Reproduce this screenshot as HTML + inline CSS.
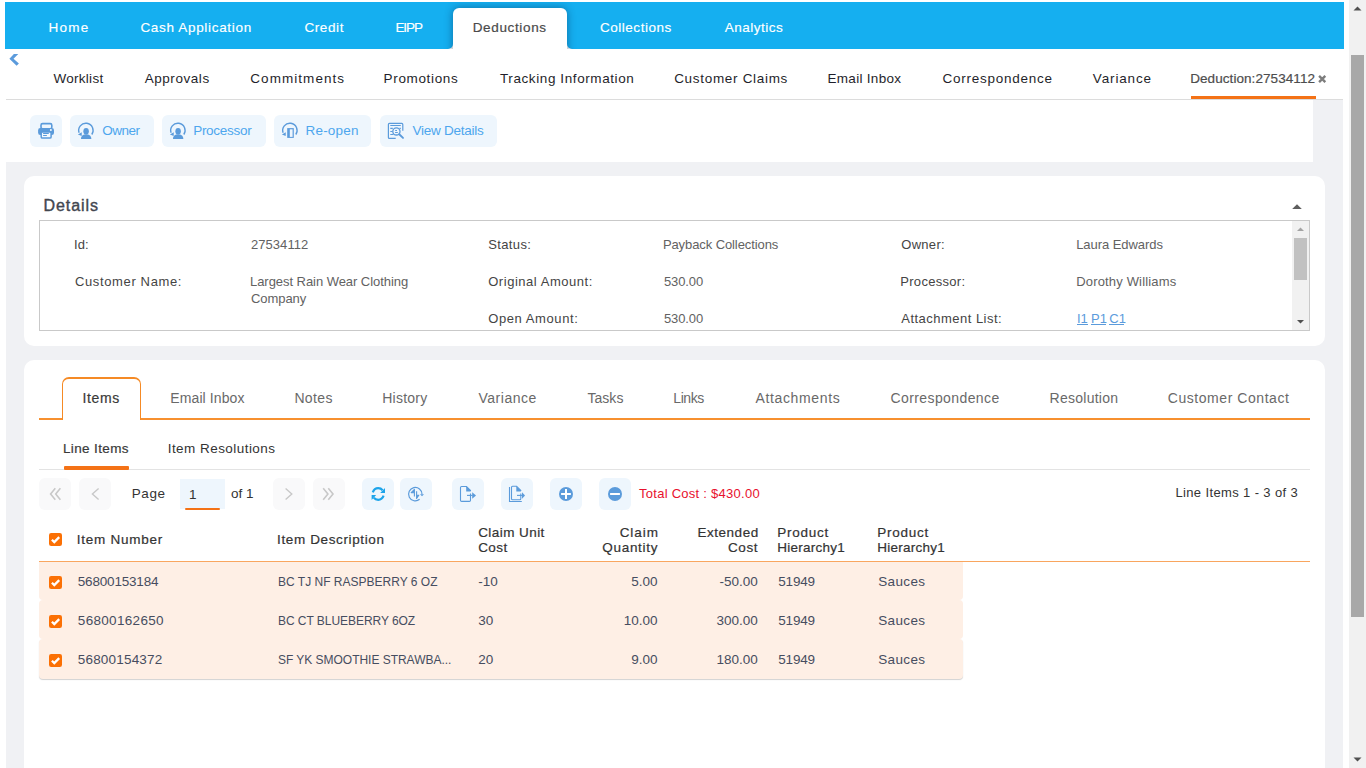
<!DOCTYPE html>
<html><head><meta charset="utf-8">
<style>
*{box-sizing:border-box;margin:0;padding:0}
html,body{width:1366px;height:768px;overflow:hidden;background:#fff;font-family:"Liberation Sans",sans-serif}
.a{position:absolute}
.tx{position:absolute;white-space:pre;font-family:"Liberation Sans",sans-serif}
.btn{position:absolute;background:#eef6fd;border-radius:6px}
.dbtn{position:absolute;background:#f9f9fa;border-radius:6px}
svg{position:absolute;overflow:visible}
</style></head><body>
<!-- page scrollbar -->
<div class="a" style="left:1349px;top:0;width:17px;height:768px;background:#f1f1f1"></div>
<div class="a" style="left:1351px;top:55px;width:13px;height:562px;background:#a8a8a8"></div>
<svg style="left:1349px;top:0" width="17" height="17"><path d="M4.5 10.5 L8.5 6.5 L12.5 10.5Z" fill="#505050"/></svg>
<svg style="left:1349px;top:751px" width="17" height="17"><path d="M4.5 6.5 L8.5 10.5 L12.5 6.5Z" fill="#505050"/></svg>

<!-- top bar -->
<div class="a" style="left:5px;top:2px;width:1339px;height:47px;overflow:hidden">
  <div class="a" style="left:0;top:0;width:448px;height:47px;background:#15aff0;border-radius:0 0 5px 0"></div>
  <div class="a" style="left:440px;top:0;width:130px;height:20px;background:#15aff0"></div>
  <div class="a" style="left:562px;top:0;width:777px;height:47px;background:#15aff0;border-radius:0 0 0 5px"></div>
  <div class="a" style="left:448px;top:6px;width:114px;height:60px;background:#fff;border-radius:6px 6px 0 0;box-shadow:0 0 9px rgba(0,30,70,.45)"></div>
</div>
<!-- back chevron -->
<svg style="left:0;top:0" width="30" height="70"><path d="M13.9 54 L18.3 54 L13.5 58.8 L18.9 63.6 L16.6 65.8 L9.4 58.8Z" fill="#5b9bdc"/></svg>

<!-- second nav line -->
<div class="a" style="left:6px;top:99px;width:1337px;height:1px;background:#dcdcdc"></div>
<div class="a" style="left:1191px;top:96px;width:125px;height:3px;background:#f47216"></div>

<!-- gray page bg -->
<div class="a" style="left:6px;top:100px;width:1337px;height:668px;background:#f0f1f4"></div>
<!-- toolbar -->
<div class="a" style="left:6px;top:100px;width:1307px;height:62px;background:#fff"></div>
<div class="btn" style="left:30px;top:115px;width:32px;height:32px"></div>
<div class="btn" style="left:70px;top:115px;width:84px;height:32px"></div>
<div class="btn" style="left:162px;top:115px;width:104px;height:32px"></div>
<div class="btn" style="left:274px;top:115px;width:97px;height:32px"></div>
<div class="btn" style="left:380px;top:115px;width:117px;height:32px"></div>

<!-- details card -->
<div class="a" style="left:24px;top:176px;width:1301px;height:170px;background:#fff;border-radius:10px"></div>
<div class="a" style="left:39px;top:220px;width:1271px;height:111px;border:1px solid #c9c9c9"></div>
<div class="a" style="left:1292px;top:221px;width:17px;height:109px;background:#f1f1f1"></div>
<div class="a" style="left:1294px;top:238px;width:13px;height:42px;background:#c1c1c1"></div>
<svg style="left:1292px;top:221px" width="17" height="109"><path d="M5 10 L8.5 6.5 L12 10Z" fill="#a3a3a3"/><path d="M5 99 L8.5 102.5 L12 99Z" fill="#505050"/></svg>
<svg style="left:1290px;top:200px" width="14" height="12"><path d="M2.2 9 L7 4.2 L11.8 9Z" fill="#5e5e5e"/></svg>

<!-- items card -->
<div class="a" style="left:24px;top:360px;width:1301px;height:420px;background:#fff;border-radius:10px"></div>
<div class="a" style="left:39px;top:418px;width:1271px;height:2px;background:#f7902f"></div>
<div class="a" style="left:62px;top:377px;width:79px;height:43px;background:#fff;border:1.5px solid #f58a25;border-top-width:2px;border-bottom:none;border-radius:7px 7px 0 0"></div>
<div class="a" style="left:39px;top:469px;width:1271px;height:1px;background:#e3e3e3"></div>
<div class="a" style="left:64px;top:466px;width:65px;height:4px;background:#f47216;border-radius:1px"></div>

<!-- pager buttons -->
<div class="dbtn" style="left:39px;top:478px;width:32px;height:32px"></div>
<div class="dbtn" style="left:79px;top:478px;width:32px;height:32px"></div>
<div class="a" style="left:180px;top:479px;width:45px;height:30px;background:#eef6fd"></div>
<div class="a" style="left:185px;top:507.5px;width:35px;height:2px;background:#f47216;border-radius:1px"></div>
<div class="dbtn" style="left:273px;top:478px;width:32px;height:32px"></div>
<div class="dbtn" style="left:313px;top:478px;width:32px;height:32px"></div>
<div class="btn" style="left:362px;top:478px;width:32px;height:32px"></div>
<div class="btn" style="left:400px;top:478px;width:32px;height:32px"></div>
<div class="btn" style="left:452px;top:478px;width:32px;height:32px"></div>
<div class="btn" style="left:501px;top:478px;width:32px;height:32px"></div>
<div class="btn" style="left:550px;top:478px;width:32px;height:32px"></div>
<div class="btn" style="left:599px;top:478px;width:32px;height:32px"></div>

<!-- table -->
<div class="a" style="left:39px;top:561px;width:1271px;height:1px;background:#f9a65f"></div>
<div class="a" style="left:39px;top:562px;width:924px;height:38px;background:#feefe5;border-radius:0 0 4px 4px"></div>
<div class="a" style="left:39px;top:600px;width:924px;height:39px;background:#feefe5;border-radius:4px"></div>
<div class="a" style="left:39px;top:639px;width:924px;height:40px;background:#feefe5;border-radius:4px;box-shadow:0 1px 1px rgba(0,0,0,.18)"></div>
<!-- printer origin 34,119 -->
<svg style="left:34px;top:119px" width="24" height="24" viewBox="0 0 24 24">
 <rect x="7" y="4.6" width="10.8" height="5.2" rx="1.6" fill="none" stroke="#5b9bdb" stroke-width="1.6"/>
 <rect x="4.1" y="9" width="15.9" height="7" rx="2.2" fill="#5b9bdb"/>
 <rect x="7.2" y="13.1" width="9.9" height="6" rx="1.2" fill="#f4f9fe" stroke="#5b9bdb" stroke-width="1.5"/>
 <path d="M9.1 14.5H14.8M9.1 16.5H12.9" stroke="#5b9bdb" stroke-width="1"/>
 <circle cx="16.9" cy="11" r="1" fill="#f4f9fe"/>
</svg>
<!-- owner origin 74,119 -->
<svg style="left:74px;top:119px" width="24" height="24" viewBox="0 0 24 24">
 <path d="M17.8 15.5 A7.2 7.2 0 1 0 5.1 13.8" fill="none" stroke="#5b9bdb" stroke-width="1.4"/>
 <path d="M3.9 15.6 L7.8 13.2 L7.7 17Z" fill="#5b9bdb"/>
 <ellipse cx="12.1" cy="12.3" rx="2.75" ry="3.4" fill="#5b9bdb"/>
 <path d="M7 20 C7 16.8 9 15.8 11 15.6 L13.2 15.6 C15.4 15.8 17.3 16.8 17.3 20Z" fill="#5b9bdb"/>
</svg>
<!-- processor origin 166,119 -->
<svg style="left:166px;top:119px" width="24" height="24" viewBox="0 0 24 24">
 <path d="M17.8 15.5 A7.2 7.2 0 1 0 5.1 13.8" fill="none" stroke="#5b9bdb" stroke-width="1.4"/>
 <path d="M3.9 15.6 L7.8 13.2 L7.7 17Z" fill="#5b9bdb"/>
 <ellipse cx="12.1" cy="12.3" rx="2.75" ry="3.4" fill="#5b9bdb"/>
 <path d="M7 20 C7 16.8 9 15.8 11 15.6 L13.2 15.6 C15.4 15.8 17.3 16.8 17.3 20Z" fill="#5b9bdb"/>
</svg>
<!-- reopen origin 278,119 -->
<svg style="left:278px;top:119px" width="24" height="24" viewBox="0 0 24 24">
 <path d="M17.8 15.5 A7.2 7.2 0 1 0 5.1 13.8" fill="none" stroke="#5b9bdb" stroke-width="1.4"/>
 <path d="M3.9 15.6 L7.8 13.2 L7.7 17Z" fill="#5b9bdb"/>
 <rect x="9.2" y="9.1" width="6.6" height="9.8" fill="#5b9bdb"/>
 <rect x="11.8" y="10.3" width="2.8" height="7.6" fill="#eef6fd"/>
</svg>
<!-- view details origin 384,119 -->
<svg style="left:384px;top:119px" width="24" height="24" viewBox="0 0 24 24">
 <path d="M11.7 19.4 H5.4 Q4.4 19.4 4.4 18.4 V5.4 Q4.4 4.4 5.4 4.4 H17.8 Q18.8 4.4 18.8 5.4 V11.7" fill="none" stroke="#5b9bdb" stroke-width="1.2"/>
 <path d="M6.3 6.5H16.8M6.3 9.4H8.8M15.5 9.4H16.8M6.3 12.5H8.5M6.3 15.5H9.5" stroke="#5b9bdb" stroke-width="1.1"/>
 <circle cx="12.4" cy="12.4" r="3.6" fill="none" stroke="#5b9bdb" stroke-width="1.3"/>
 <path d="M11.2 11.5H13M11.1 13.5H13.8" stroke="#5b9bdb" stroke-width="1"/>
 <path d="M15.2 15.2 L19 18.9" stroke="#5b9bdb" stroke-width="1.9" stroke-linecap="round"/>
</svg>
<!-- pager disabled chevrons -->
<svg style="left:35px;top:474px" width="320" height="40" viewBox="0 0 320 40">
 <path d="M20.3 14.3 L15.6 20 L20.3 25.7 M25.4 14.3 L20.7 20 L25.4 25.7" fill="none" stroke="#c8c8c8" stroke-width="1.6"/>
 <path d="M63.6 14.5 L57.4 20 L63.6 25.5" fill="none" stroke="#c8c8c8" stroke-width="1.4"/>
 <path d="M250.6 14.5 L256.8 20 L250.6 25.5" fill="none" stroke="#c8c8c8" stroke-width="1.4"/>
 <path d="M288.2 14.3 L292.9 20 L288.2 25.7 M293.3 14.3 L298 20 L293.3 25.7" fill="none" stroke="#c8c8c8" stroke-width="1.6"/>
</svg>
<!-- refresh origin 366,482 -->
<svg style="left:366px;top:482px" width="24" height="24" viewBox="0 0 24 24">
 <path d="M6.8 10.3 C7.8 7.5 9.8 6.2 12.2 6.2 C14.2 6.2 15.6 7 16.6 8.2" fill="none" stroke="#1da4ea" stroke-width="2.2"/>
 <path d="M14.2 10.9 L19 10.9 L19 6Z" fill="#1da4ea"/>
 <path d="M17.6 13.7 C16.6 16.5 14.6 17.8 12.2 17.8 C10.2 17.8 8.8 17 7.8 15.8" fill="none" stroke="#1da4ea" stroke-width="2.2"/>
 <path d="M10.2 13.1 L5.6 13.1 L5.6 18Z" fill="#1da4ea"/>
</svg>
<!-- currency origin 404,482 -->
<svg style="left:404px;top:482px" width="24" height="24" viewBox="0 0 24 24">
 <path d="M15.6 17.3 A6.7 6.7 0 1 1 18 12.2" fill="none" stroke="#5b9bdb" stroke-width="1.2"/>
 <path d="M16 12.3 L20 12.3 L18 14.3Z" fill="#5b9bdb"/>
 <path d="M10.4 14.6 V7.4 L7.2 10.7 H10.4" fill="#5b9bdb" stroke="#5b9bdb" stroke-width="1.1" stroke-linejoin="round"/>
 <path d="M12.6 9.2 V16.4 L14.8 13.3 H12.6" fill="#5b9bdb" stroke="#5b9bdb" stroke-width="1.1" stroke-linejoin="round"/>
</svg>
<!-- export origin 456,482 -->
<svg style="left:456px;top:482px" width="24" height="24" viewBox="0 0 24 24">
 <path d="M14.5 11.4 V18.3 Q14.5 19.4 13.4 19.4 H5.6 Q4.5 19.4 4.5 18.3 V5.6 Q4.5 4.5 5.6 4.5 H10.5 L14.5 8.5 V9" fill="none" stroke="#5b9bdb" stroke-width="1.1"/>
 <path d="M10.2 4.6 L10.6 4.6 L14.7 8.6 V9.6 H10.2Z" fill="#5b9bdb"/>
 <path d="M11 13.4 H16.5" stroke="#5b9bdb" stroke-width="1.1"/>
 <path d="M16.2 10.2 L20 13.4 L16.2 16.8Z" fill="#5b9bdb"/>
</svg>
<!-- export multiple origin 505,482 -->
<svg style="left:505px;top:482px" width="24" height="24" viewBox="0 0 24 24">
 <path d="M4.5 5 V19.5 H16.8" fill="none" stroke="#5b9bdb" stroke-width="1.1"/>
 <path d="M15.8 11.4 V16.8 Q15.8 17.8 14.8 17.8 H7.5 Q6.5 17.8 6.5 16.8 V5.3 Q6.5 4.3 7.5 4.3 H11.6 L15.8 8.4 V9" fill="none" stroke="#5b9bdb" stroke-width="1.1"/>
 <path d="M11.3 4.4 L11.7 4.4 L15.9 8.5 V9.6 H11.3Z" fill="#5b9bdb"/>
 <path d="M12 13.4 H17.3" stroke="#5b9bdb" stroke-width="1.1"/>
 <path d="M17 10.2 L20 13.4 L17 16.8Z" fill="#5b9bdb"/>
</svg>
<!-- plus origin 554,482 -->
<svg style="left:554px;top:482px" width="24" height="24" viewBox="0 0 24 24">
 <circle cx="12" cy="12" r="7" fill="#5b9bdb"/>
 <path d="M7.1 12H16.9M12 7.1V16.9" stroke="#fff" stroke-width="2"/>
</svg>
<!-- minus origin 603,482 -->
<svg style="left:603px;top:482px" width="24" height="24" viewBox="0 0 24 24">
 <circle cx="12" cy="12" r="7" fill="#5b9bdb"/>
 <path d="M7.1 12H16.9" stroke="#fff" stroke-width="2"/>
</svg>
<!-- close x -->
<svg style="left:1300px;top:66px" width="36" height="24" viewBox="0 0 36 24">
 <path d="M19.1 9.9 L25.3 16.1 M25.3 9.9 L19.1 16.1" stroke="#7d7d7d" stroke-width="2.4"/>
</svg>
<!-- checkboxes -->
<svg style="left:49px;top:533px" width="13" height="13" viewBox="0 0 13 13"><rect width="13" height="13" rx="2.2" fill="#fb7004"/><path d="M2.9 6.7 L5.3 9.1 L10.2 4.1" fill="none" stroke="#fff" stroke-width="2.3"/></svg>
<svg style="left:49px;top:576px" width="13" height="13" viewBox="0 0 13 13"><rect width="13" height="13" rx="2.2" fill="#fb7004"/><path d="M2.9 6.7 L5.3 9.1 L10.2 4.1" fill="none" stroke="#fff" stroke-width="2.3"/></svg>
<svg style="left:49px;top:615px" width="13" height="13" viewBox="0 0 13 13"><rect width="13" height="13" rx="2.2" fill="#fb7004"/><path d="M2.9 6.7 L5.3 9.1 L10.2 4.1" fill="none" stroke="#fff" stroke-width="2.3"/></svg>
<svg style="left:49px;top:654px" width="13" height="13" viewBox="0 0 13 13"><rect width="13" height="13" rx="2.2" fill="#fb7004"/><path d="M2.9 6.7 L5.3 9.1 L10.2 4.1" fill="none" stroke="#fff" stroke-width="2.3"/></svg>
<!-- link underlines -->
<div class="a" style="left:1077px;top:324px;width:11px;height:1px;background:#5b9bdc"></div>
<div class="a" style="left:1091px;top:324px;width:15px;height:1px;background:#5b9bdc"></div>
<div class="a" style="left:1109px;top:324px;width:15px;height:1px;background:#5b9bdc"></div>

<div class="tx" style="left:48.40px;top:19px;font-size:13.5px;line-height:18px;color:#fff;letter-spacing:1.266px;-webkit-text-stroke:0.15px #fff;">Home</div>
<div class="tx" style="left:140.40px;top:19px;font-size:13.5px;line-height:18px;color:#fff;letter-spacing:0.680px;-webkit-text-stroke:0.15px #fff;">Cash Application</div>
<div class="tx" style="left:304.40px;top:19px;font-size:13.5px;line-height:18px;color:#fff;letter-spacing:0.608px;-webkit-text-stroke:0.15px #fff;">Credit</div>
<div class="tx" style="left:395.40px;top:19px;font-size:13.5px;line-height:18px;color:#fff;letter-spacing:-1.087px;-webkit-text-stroke:0.15px #fff;">EIPP</div>
<div class="tx" style="left:472.70px;top:19px;font-size:13.5px;line-height:18px;color:#4a4a4a;letter-spacing:0.646px;-webkit-text-stroke:0.2px #4a4a4a;">Deductions</div>
<div class="tx" style="left:600.00px;top:19px;font-size:13.5px;line-height:18px;color:#fff;letter-spacing:0.522px;-webkit-text-stroke:0.15px #fff;">Collections</div>
<div class="tx" style="left:724.80px;top:19px;font-size:13.5px;line-height:18px;color:#fff;letter-spacing:0.491px;-webkit-text-stroke:0.15px #fff;">Analytics</div>
<div class="tx" style="left:53.50px;top:70px;font-size:13.5px;line-height:18px;color:#1f1f2b;letter-spacing:0.271px;">Worklist</div>
<div class="tx" style="left:144.70px;top:70px;font-size:13.5px;line-height:18px;color:#1f1f2b;letter-spacing:0.552px;">Approvals</div>
<div class="tx" style="left:250.30px;top:70px;font-size:13.5px;line-height:18px;color:#1f1f2b;letter-spacing:1.049px;">Commitments</div>
<div class="tx" style="left:383.60px;top:70px;font-size:13.5px;line-height:18px;color:#1f1f2b;letter-spacing:0.652px;">Promotions</div>
<div class="tx" style="left:500.00px;top:70px;font-size:13.5px;line-height:18px;color:#1f1f2b;letter-spacing:0.593px;">Tracking Information</div>
<div class="tx" style="left:674.20px;top:70px;font-size:13.5px;line-height:18px;color:#1f1f2b;letter-spacing:0.688px;">Customer Claims</div>
<div class="tx" style="left:827.50px;top:70px;font-size:13.5px;line-height:18px;color:#1f1f2b;letter-spacing:0.302px;">Email Inbox</div>
<div class="tx" style="left:942.40px;top:70px;font-size:13.5px;line-height:18px;color:#1f1f2b;letter-spacing:0.761px;">Correspondence</div>
<div class="tx" style="left:1092.80px;top:70px;font-size:13.5px;line-height:18px;color:#1f1f2b;letter-spacing:0.861px;">Variance</div>
<div class="tx" style="left:1190.20px;top:70px;font-size:13.5px;line-height:18px;color:#4d4d4d;letter-spacing:0.071px;-webkit-text-stroke:0.2px #4d4d4d;">Deduction:27534112</div>
<div class="tx" style="left:102.30px;top:122px;font-size:13.5px;line-height:18px;color:#4da6ee;letter-spacing:-0.492px;">Owner</div>
<div class="tx" style="left:193.20px;top:122px;font-size:13.5px;line-height:18px;color:#4da6ee;letter-spacing:-0.284px;">Processor</div>
<div class="tx" style="left:305.60px;top:122px;font-size:13.5px;line-height:18px;color:#4da6ee;letter-spacing:0.170px;">Re-open</div>
<div class="tx" style="left:412.50px;top:122px;font-size:13.5px;line-height:18px;color:#4da6ee;letter-spacing:-0.253px;">View Details</div>
<div class="tx" style="left:43.60px;top:195px;font-size:16.0px;line-height:21px;color:#42464f;letter-spacing:0.899px;-webkit-text-stroke:0.4px #42464f;">Details</div>
<div class="tx" style="left:74.00px;top:236px;font-size:13.0px;line-height:17px;color:#444;letter-spacing:0.079px;">Id:</div>
<div class="tx" style="left:75.00px;top:273px;font-size:13.0px;line-height:17px;color:#444;letter-spacing:0.628px;">Customer Name:</div>
<div class="tx" style="left:251.00px;top:236px;font-size:13px;line-height:17px;color:#626262;letter-spacing:0.051px;">27534112</div>
<div class="tx" style="left:250.00px;top:273px;font-size:13px;line-height:17px;color:#626262;letter-spacing:-0.049px;">Largest Rain Wear Clothing</div>
<div class="tx" style="left:251.00px;top:290px;font-size:13px;line-height:17px;color:#626262;letter-spacing:-0.073px;">Company</div>
<div class="tx" style="left:488.20px;top:236px;font-size:13.0px;line-height:17px;color:#444;letter-spacing:0.374px;">Status:</div>
<div class="tx" style="left:488.20px;top:273px;font-size:13.0px;line-height:17px;color:#444;letter-spacing:0.539px;">Original Amount:</div>
<div class="tx" style="left:488.20px;top:310px;font-size:13.0px;line-height:17px;color:#444;letter-spacing:0.590px;">Open Amount:</div>
<div class="tx" style="left:662.90px;top:236px;font-size:13px;line-height:17px;color:#626262;letter-spacing:-0.092px;">Payback Collections</div>
<div class="tx" style="left:663.90px;top:273px;font-size:13px;line-height:17px;color:#626262;letter-spacing:-0.086px;">530.00</div>
<div class="tx" style="left:663.90px;top:310px;font-size:13px;line-height:17px;color:#626262;letter-spacing:-0.086px;">530.00</div>
<div class="tx" style="left:901.30px;top:236px;font-size:13.0px;line-height:17px;color:#444;letter-spacing:0.282px;">Owner:</div>
<div class="tx" style="left:900.30px;top:273px;font-size:13.0px;line-height:17px;color:#444;letter-spacing:0.287px;">Processor:</div>
<div class="tx" style="left:901.30px;top:310px;font-size:13.0px;line-height:17px;color:#444;letter-spacing:0.474px;">Attachment List:</div>
<div class="tx" style="left:1076.20px;top:236px;font-size:13px;line-height:17px;color:#626262;letter-spacing:-0.062px;">Laura Edwards</div>
<div class="tx" style="left:1076.20px;top:273px;font-size:13px;line-height:17px;color:#626262;letter-spacing:0.166px;">Dorothy Williams</div>
<div class="tx" style="left:82.50px;top:389px;font-size:14.0px;line-height:19px;color:#3a3a3a;letter-spacing:0.643px;-webkit-text-stroke:0.2px #3a3a3a;">Items</div>
<div class="tx" style="left:170.30px;top:389px;font-size:14.0px;line-height:19px;color:#696969;letter-spacing:0.106px;">Email Inbox</div>
<div class="tx" style="left:294.40px;top:389px;font-size:14.0px;line-height:19px;color:#696969;letter-spacing:0.357px;">Notes</div>
<div class="tx" style="left:382.20px;top:389px;font-size:14.0px;line-height:19px;color:#696969;letter-spacing:0.240px;">History</div>
<div class="tx" style="left:478.40px;top:389px;font-size:14.0px;line-height:19px;color:#696969;letter-spacing:0.539px;">Variance</div>
<div class="tx" style="left:587.50px;top:389px;font-size:14.0px;line-height:19px;color:#696969;letter-spacing:0.028px;">Tasks</div>
<div class="tx" style="left:673.30px;top:389px;font-size:14.0px;line-height:19px;color:#696969;letter-spacing:-0.421px;">Links</div>
<div class="tx" style="left:755.50px;top:389px;font-size:14.0px;line-height:19px;color:#696969;letter-spacing:0.639px;">Attachments</div>
<div class="tx" style="left:890.50px;top:389px;font-size:14.0px;line-height:19px;color:#696969;letter-spacing:0.398px;">Correspondence</div>
<div class="tx" style="left:1049.50px;top:389px;font-size:14.0px;line-height:19px;color:#696969;letter-spacing:0.271px;">Resolution</div>
<div class="tx" style="left:1167.80px;top:389px;font-size:14.0px;line-height:19px;color:#696969;letter-spacing:0.551px;">Customer Contact</div>
<div class="tx" style="left:63.00px;top:440px;font-size:13.5px;line-height:18px;color:#3a3a3a;letter-spacing:0.363px;-webkit-text-stroke:0.2px #3a3a3a;">Line Items</div>
<div class="tx" style="left:167.70px;top:440px;font-size:13.5px;line-height:18px;color:#333;letter-spacing:0.454px;">Item Resolutions</div>
<div class="tx" style="left:131.70px;top:485px;font-size:13.5px;line-height:18px;color:#333;letter-spacing:0.626px;">Page</div>
<div class="tx" style="left:189.00px;top:486px;font-size:13.5px;line-height:18px;color:#333;">1</div>
<div class="tx" style="left:231.10px;top:485px;font-size:13.5px;line-height:18px;color:#333;">of 1</div>
<div class="tx" style="left:639.00px;top:485px;font-size:13.0px;line-height:17px;color:#e8112d;letter-spacing:0.268px;">Total Cost : $430.00</div>
<div class="tx" style="left:1175.40px;top:484px;font-size:13.0px;line-height:17px;color:#333;letter-spacing:0.372px;">Line Items 1 - 3 of 3</div>
<div class="tx" style="left:76.80px;top:531px;font-size:13.5px;line-height:18px;color:#333;letter-spacing:0.748px;-webkit-text-stroke:0.2px #333;">Item Number</div>
<div class="tx" style="left:277.00px;top:531px;font-size:13.5px;line-height:18px;color:#333;letter-spacing:0.632px;-webkit-text-stroke:0.2px #333;">Item Description</div>
<div class="tx" style="left:478.20px;top:524px;font-size:13.5px;line-height:18px;color:#333;letter-spacing:0.432px;-webkit-text-stroke:0.2px #333;">Claim Unit</div>
<div class="tx" style="left:478.20px;top:539px;font-size:13.5px;line-height:18px;color:#333;letter-spacing:0.398px;-webkit-text-stroke:0.2px #333;">Cost</div>
<div class="tx" style="left:619.70px;top:524px;font-size:13.5px;line-height:18px;color:#333;letter-spacing:0.936px;-webkit-text-stroke:0.2px #333;">Claim</div>
<div class="tx" style="left:602.30px;top:539px;font-size:13.5px;line-height:18px;color:#333;letter-spacing:0.696px;-webkit-text-stroke:0.2px #333;">Quantity</div>
<div class="tx" style="left:697.40px;top:524px;font-size:13.5px;line-height:18px;color:#333;letter-spacing:0.538px;-webkit-text-stroke:0.2px #333;">Extended</div>
<div class="tx" style="left:728.00px;top:539px;font-size:13.5px;line-height:18px;color:#333;letter-spacing:0.564px;-webkit-text-stroke:0.2px #333;">Cost</div>
<div class="tx" style="left:777.20px;top:524px;font-size:13.5px;line-height:18px;color:#333;letter-spacing:0.738px;-webkit-text-stroke:0.2px #333;">Product</div>
<div class="tx" style="left:777.20px;top:539px;font-size:13.5px;line-height:18px;color:#333;letter-spacing:0.248px;-webkit-text-stroke:0.2px #333;">Hierarchy1</div>
<div class="tx" style="left:877.20px;top:524px;font-size:13.5px;line-height:18px;color:#333;letter-spacing:0.738px;-webkit-text-stroke:0.2px #333;">Product</div>
<div class="tx" style="left:877.20px;top:539px;font-size:13.5px;line-height:18px;color:#333;letter-spacing:0.248px;-webkit-text-stroke:0.2px #333;">Hierarchy1</div>
<div class="tx" style="left:77.80px;top:573px;font-size:13.5px;line-height:18px;color:#464d60;letter-spacing:-0.188px;">56800153184</div>
<div class="tx" style="left:278.00px;top:574px;font-size:12px;line-height:16px;color:#464d60;letter-spacing:0.006px;">BC TJ NF RASPBERRY 6 OZ</div>
<div class="tx" style="left:478.20px;top:573px;font-size:13.5px;line-height:18px;color:#464d60;">-10</div>
<div class="tx" style="left:631.33px;top:573px;font-size:13.5px;line-height:18px;color:#464d60;">5.00</div>
<div class="tx" style="left:719.53px;top:573px;font-size:13.5px;line-height:18px;color:#464d60;">-50.00</div>
<div class="tx" style="left:778.20px;top:573px;font-size:13.5px;line-height:18px;color:#464d60;letter-spacing:-0.158px;">51949</div>
<div class="tx" style="left:878.20px;top:573px;font-size:13.5px;line-height:18px;color:#464d60;letter-spacing:0.364px;">Sauces</div>
<div class="tx" style="left:77.80px;top:612px;font-size:13.5px;line-height:18px;color:#464d60;letter-spacing:0.322px;">56800162650</div>
<div class="tx" style="left:278.00px;top:613px;font-size:12px;line-height:16px;color:#464d60;letter-spacing:-0.047px;">BC CT BLUEBERRY 6OZ</div>
<div class="tx" style="left:478.20px;top:612px;font-size:13.5px;line-height:18px;color:#464d60;">30</div>
<div class="tx" style="left:623.83px;top:612px;font-size:13.5px;line-height:18px;color:#464d60;">10.00</div>
<div class="tx" style="left:716.52px;top:612px;font-size:13.5px;line-height:18px;color:#464d60;">300.00</div>
<div class="tx" style="left:778.20px;top:612px;font-size:13.5px;line-height:18px;color:#464d60;letter-spacing:-0.158px;">51949</div>
<div class="tx" style="left:878.20px;top:612px;font-size:13.5px;line-height:18px;color:#464d60;letter-spacing:0.364px;">Sauces</div>
<div class="tx" style="left:77.80px;top:651px;font-size:13.5px;line-height:18px;color:#464d60;letter-spacing:0.182px;">56800154372</div>
<div class="tx" style="left:278.00px;top:652px;font-size:12px;line-height:16px;color:#464d60;letter-spacing:-0.029px;">SF YK SMOOTHIE STRAWBA...</div>
<div class="tx" style="left:478.20px;top:651px;font-size:13.5px;line-height:18px;color:#464d60;">20</div>
<div class="tx" style="left:631.33px;top:651px;font-size:13.5px;line-height:18px;color:#464d60;">9.00</div>
<div class="tx" style="left:716.52px;top:651px;font-size:13.5px;line-height:18px;color:#464d60;">180.00</div>
<div class="tx" style="left:778.20px;top:651px;font-size:13.5px;line-height:18px;color:#464d60;letter-spacing:-0.158px;">51949</div>
<div class="tx" style="left:878.20px;top:651px;font-size:13.5px;line-height:18px;color:#464d60;letter-spacing:0.364px;">Sauces</div>
<div class="tx" style="left:1076.90px;top:310px;font-size:13px;line-height:17px;color:#5b9bdc;">I1</div>
<div class="tx" style="left:1091.00px;top:310px;font-size:13px;line-height:17px;color:#5b9bdc;">P1</div>
<div class="tx" style="left:1109.30px;top:310px;font-size:13px;line-height:17px;color:#5b9bdc;">C1</div>
</body></html>
